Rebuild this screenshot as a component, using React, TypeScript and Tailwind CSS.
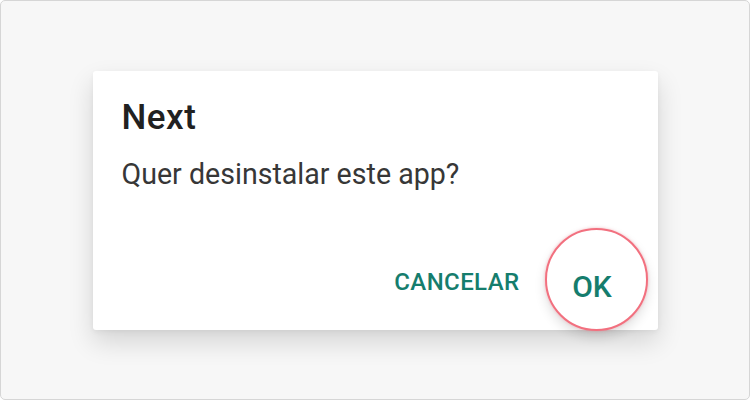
import React from "react";

export default function App() {
  return (
    <div className="w-[750px] h-[400px] bg-[#f7f7f7] border border-[#d6d6d6] rounded-[5px] flex items-center justify-center font-['Roboto',sans-serif]">
      <div className="w-[565px] h-[259px] bg-white rounded-[3px] shadow-[0_12px_26px_rgba(0,0,0,0.14),0_2px_5px_rgba(0,0,0,0.05)] flex flex-col pl-[29px] pr-[10px] pt-[27px]">
        <div className="text-[35px] leading-[40px] font-medium tracking-[0.5px] text-[#212121]">Next</div>
        <div className="mt-[18px] text-[28.6px] leading-[36px] text-[#373737]">Quer desinstalar este app?</div>
        <div className="mt-auto flex items-center justify-end gap-[25px]">
          <span className="mt-[7px] text-[24px] leading-[28px] font-medium text-[#157d6d] tracking-[0.4px]">CANCELAR</span>
          <div className="w-[103px] h-[103px] -mb-[1px] rounded-full bg-white border-[2.5px] border-[#f2707f] shadow-[0_0_3px_rgba(242,112,127,0.45),0_6px_12px_rgba(0,0,0,0.12)] flex items-center justify-center">
            <span className="mt-[15px] mr-[8px] text-[30px] leading-[36px] font-medium text-[#157d6d]">OK</span>
          </div>
        </div>
      </div>
    </div>
  );
}
